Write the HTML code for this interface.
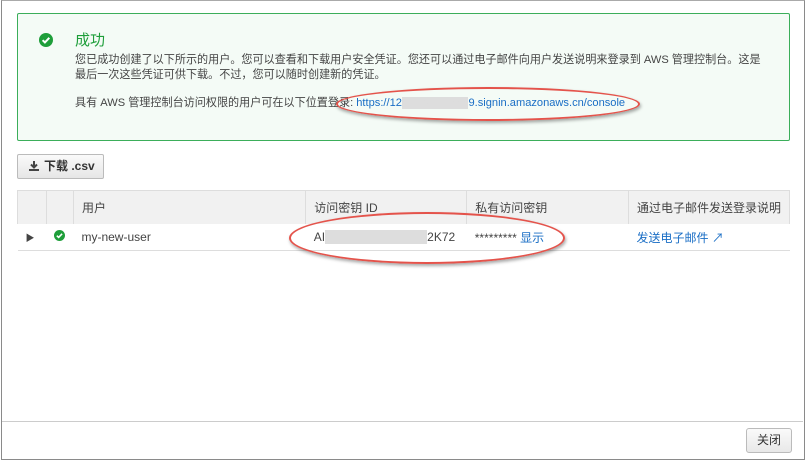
<!DOCTYPE html>
<html><head><meta charset="utf-8"><style>
body{margin:0;width:810px;height:460px;background:#fff;font-family:"Liberation Sans","Noto Sans CJK SC",sans-serif;font-size:12px;color:#444;position:relative;overflow:hidden}
.frame{position:absolute;left:1px;top:0;width:802px;height:458px;border:1px solid #8a8a8a;border-top:1px solid #aaa}
.ok{position:absolute;left:17px;top:13px;width:771px;height:126px;border:1px solid #3bae5a;border-radius:2px;background:#f4fbf6}
.t{position:absolute;left:57px;top:15px;font-size:15px;color:#1e9e3a}
.p{position:absolute;left:57px;width:690px;line-height:15px;color:#444;font-size:11.1px}
a{color:#1a6ec5;text-decoration:none}
.btn{position:absolute;left:17px;top:154px;width:85px;height:23px;border:1px solid #bbb;border-radius:2px;background:linear-gradient(#fafafa,#e6e6e6);font-weight:bold;font-size:12px;line-height:23px;color:#333}
table{position:absolute;left:17px;top:190px;width:773px;border-collapse:collapse}
th{background:#f1f1f1;font-weight:normal;text-align:left;height:33px;border-left:1px solid #ddd;border-top:1px solid #ddd;padding:0 8px;color:#444;white-space:nowrap}
td{height:26px;border-bottom:1px solid #ddd;padding:0 8px;color:#444;white-space:nowrap}
.el{position:absolute;border:2px solid #e4534b;border-radius:50%;box-shadow:1px 2px 3px rgba(0,0,0,.35)}
.foot{position:absolute;left:2px;top:421px;width:801px;border-top:1px solid #ccc}
.close{position:absolute;left:746px;top:428px;width:44px;height:23px;border:1px solid #bbb;border-radius:3px;background:linear-gradient(#fafafa,#e8e8e8);text-align:center;line-height:23px;color:#333}
</style></head><body>
<div class="frame"></div>
<div class="ok">
<svg style="position:absolute;left:21px;top:19px" width="14" height="14" viewBox="0 0 14 14"><circle cx="7" cy="7" r="7" fill="#1e9e3a"/><path d="M3.6 7.2l2.3 2.2 4.4-4.6" stroke="#fff" stroke-width="2" fill="none"/></svg>
<div class="t">成功</div>
<div class="p" style="top:39px">您已成功创建了以下所示的用户。您可以查看和下载用户安全凭证。您还可以通过电子邮件向用户发送说明来登录到 AWS 管理控制台。这是最后一次这些凭证可供下载。不过，您可以随时创建新的凭证。</div>
<div class="p" style="top:82px">具有 AWS 管理控制台访问权限的用户可在以下位置登录: <a>https://12<span style="background:#ddd;color:#ddd">xxxxxxxxxxxx</span>9.signin.amazonaws.cn/console</a></div>
</div>
<div class="el" style="left:336px;top:87px;width:300px;height:30px"></div>
<div class="btn"><svg style="position:absolute;left:10px;top:5px" width="12" height="12" viewBox="0 0 12 12"><path d="M6 1v6M3 4.5L6 7.5 9 4.5" stroke="#444" stroke-width="2" fill="none"/><path d="M1 9h10v2H1z" fill="#444"/></svg><span style="position:absolute;left:26px">下载 .csv</span></div>
<table>
<tr><th style="width:12px;border-left:1px solid #ddd"></th><th style="width:10px"></th><th style="width:216px">用户</th><th style="width:144px">访问密钥 ID</th><th style="width:145px">私有访问密钥</th><th style="border-right:1px solid #ddd">通过电子邮件发送登录说明</th></tr>
<tr><td style="font-size:9px">▶</td><td><svg width="11" height="11" viewBox="0 0 14 14"><circle cx="7" cy="7" r="7" fill="#1e9e3a"/><path d="M3.6 7.2l2.3 2.2 4.4-4.6" stroke="#fff" stroke-width="2" fill="none"/></svg></td><td>my-new-user</td><td>AI<span style="background:#ddd;color:#ddd">xxxxxxxxxxxxxxxxx</span>2K72</td><td>********* <a>显示</a></td><td><a>发送电子邮件 ↗</a></td></tr>
</table>
<div class="el" style="left:289px;top:212px;width:272px;height:48px"></div>
<div class="foot"></div>
<div class="close">关闭</div>
</body></html>
